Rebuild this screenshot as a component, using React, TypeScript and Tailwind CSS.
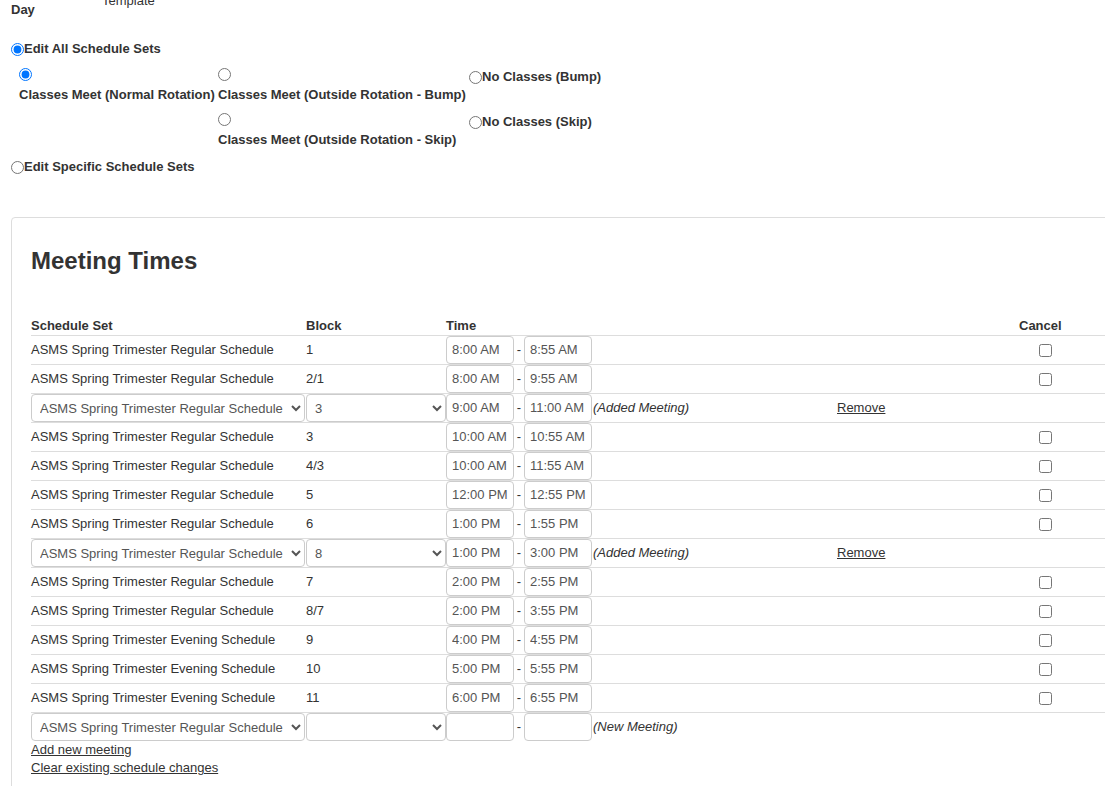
import React from "react";

type Row = {
  set: string;
  block: string;
  start: string;
  end: string;
  kind: "fixed" | "added" | "new";
};

const REG = "ASMS Spring Trimester Regular Schedule";
const EVE = "ASMS Spring Trimester Evening Schedule";

const rows: Row[] = [
  { set: REG, block: "1", start: "8:00 AM", end: "8:55 AM", kind: "fixed" },
  { set: REG, block: "2/1", start: "8:00 AM", end: "9:55 AM", kind: "fixed" },
  { set: REG, block: "3", start: "9:00 AM", end: "11:00 AM", kind: "added" },
  { set: REG, block: "3", start: "10:00 AM", end: "10:55 AM", kind: "fixed" },
  { set: REG, block: "4/3", start: "10:00 AM", end: "11:55 AM", kind: "fixed" },
  { set: REG, block: "5", start: "12:00 PM", end: "12:55 PM", kind: "fixed" },
  { set: REG, block: "6", start: "1:00 PM", end: "1:55 PM", kind: "fixed" },
  { set: REG, block: "8", start: "1:00 PM", end: "3:00 PM", kind: "added" },
  { set: REG, block: "7", start: "2:00 PM", end: "2:55 PM", kind: "fixed" },
  { set: REG, block: "8/7", start: "2:00 PM", end: "3:55 PM", kind: "fixed" },
  { set: EVE, block: "9", start: "4:00 PM", end: "4:55 PM", kind: "fixed" },
  { set: EVE, block: "10", start: "5:00 PM", end: "5:55 PM", kind: "fixed" },
  { set: EVE, block: "11", start: "6:00 PM", end: "6:55 PM", kind: "fixed" },
  { set: REG, block: "", start: "", end: "", kind: "new" },
];

function Radio({ name, checked }: { name: string; checked?: boolean }) {
  return (
    <input
      type="radio"
      name={name}
      defaultChecked={checked}
      className="m-0 w-[13px] h-[13px] shrink-0"
    />
  );
}

function TimeInput({ value }: { value: string }) {
  return (
    <input
      type="text"
      defaultValue={value}
      className="w-[68px] h-[28px] pl-[5px] pr-[2px] pb-[1px] border border-[#ccc] rounded-[4px] text-[13px] text-[#555] bg-white outline-none"
    />
  );
}

function SetSelect({ value }: { value: string }) {
  return (
    <select
      defaultValue={value}
      className="w-[274px] h-[28px] pl-[4px] border border-[#ccc] rounded-[4px] text-[13px] text-[#555] bg-white outline-none"
    >
      <option value={REG}>{REG}</option>
      <option value={EVE}>{EVE}</option>
    </select>
  );
}

function BlockSelect({ value }: { value: string }) {
  return (
    <select
      defaultValue={value}
      className="w-[140px] h-[28px] pl-[4px] border border-[#ccc] rounded-[4px] text-[13px] text-[#555] bg-white outline-none"
    >
      <option value=""></option>
      <option value="3">3</option>
      <option value="8">8</option>
    </select>
  );
}

export default function App() {
  return (
    <div
      className="w-[1105px] h-[786px] overflow-hidden bg-white text-[#333] text-[13px] leading-[18px] pt-[1px]"
      style={{ fontFamily: '"Liberation Sans", Arial, sans-serif' }}
    >
      {/* Day / Template row (partially scrolled off) */}
      <div className="flex items-start pl-[11px] h-[18px]">
        <span className="font-bold w-[91px]">Day</span>
        <span className="-mt-[9px]">Template</span>
      </div>

      {/* Edit All Schedule Sets */}
      <label className="flex items-center h-[18px] mt-[21px] pl-[11px] font-bold">
        <Radio name="mode" checked />
        <span>Edit All Schedule Sets</span>
      </label>

      {/* Options */}
      <div className="mt-[9px] pl-[19px] font-bold">
        <div className="flex h-[45px]">
          <div className="w-[199px] flex flex-col">
            <div className="pt-[1px] h-[14px]">
              <Radio name="opt" checked />
            </div>
            <div className="mt-[5px]">Classes Meet (Normal Rotation)</div>
          </div>
          <div className="w-[251px] flex flex-col">
            <div className="pt-[1px] h-[14px]">
              <Radio name="opt" />
            </div>
            <div className="mt-[5px]">Classes Meet (Outside Rotation - Bump)</div>
          </div>
          <label className="flex items-center h-[20px]">
            <Radio name="opt" />
            <span>No Classes (Bump)</span>
          </label>
        </div>
        <div className="flex h-[46px]">
          <div className="w-[199px]" />
          <div className="w-[251px] flex flex-col">
            <div className="pt-[1px] h-[14px]">
              <Radio name="opt" />
            </div>
            <div className="mt-[5px]">Classes Meet (Outside Rotation - Skip)</div>
          </div>
          <label className="flex items-center h-[20px]">
            <Radio name="opt" />
            <span>No Classes (Skip)</span>
          </label>
        </div>
      </div>

      {/* Edit Specific */}
      <label className="flex items-center h-[18px] pl-[11px] font-bold">
        <Radio name="mode" />
        <span>Edit Specific Schedule Sets</span>
      </label>

      {/* Meeting Times panel */}
      <div className="mt-[41px] ml-[11px] w-[1120px] border border-[#ddd] rounded-[4px] pl-[19px] pt-[30px] pb-[40px]">
        <h2 className="text-[24px] leading-[26px] font-bold text-[#333]">Meeting Times</h2>

        <div className="mt-[43px] w-[1080px]">
          {/* header */}
          <div className="flex h-[18px] font-bold">
            <div className="w-[275px]">Schedule Set</div>
            <div className="w-[140px]">Block</div>
            <div className="w-[391px]">Time</div>
            <div className="w-[163px]" />
            <div className="flex-1 pl-[19px]">Cancel</div>
          </div>

          {rows.map((r, i) => (
            <div
              key={i}
              className="flex items-center h-[29px] border-t border-[#ddd]"
            >
              <div className="w-[275px] flex items-center">
                {r.kind === "fixed" ? <span>{r.set}</span> : <SetSelect value={r.set} />}
              </div>
              <div className="w-[140px] flex items-center">
                {r.kind === "fixed" ? <span>{r.block}</span> : <BlockSelect value={r.block} />}
              </div>
              <div className="w-[391px] flex items-center">
                <TimeInput value={r.start} />
                <span className="w-[10px] text-center">-</span>
                <TimeInput value={r.end} />
                {r.kind === "added" && (
                  <span className="ml-[1px] italic">(Added Meeting)</span>
                )}
                {r.kind === "new" && (
                  <span className="ml-[1px] italic">(New Meeting)</span>
                )}
              </div>
              <div className="w-[163px] flex items-center">
                {r.kind === "added" && (
                  <a href="#" className="underline text-[#333]">
                    Remove
                  </a>
                )}
              </div>
              <div className="flex-1 flex items-center">
                {r.kind === "fixed" && (
                  <input type="checkbox" className="m-0 ml-[39px] w-[13px] h-[13px]" />
                )}
              </div>
            </div>
          ))}
        </div>

        <div className="flex flex-col items-start">
          <a href="#" className="underline text-[#333]">
            Add new meeting
          </a>
          <a href="#" className="underline text-[#333]">
            Clear existing schedule changes
          </a>
        </div>
      </div>
    </div>
  );
}
